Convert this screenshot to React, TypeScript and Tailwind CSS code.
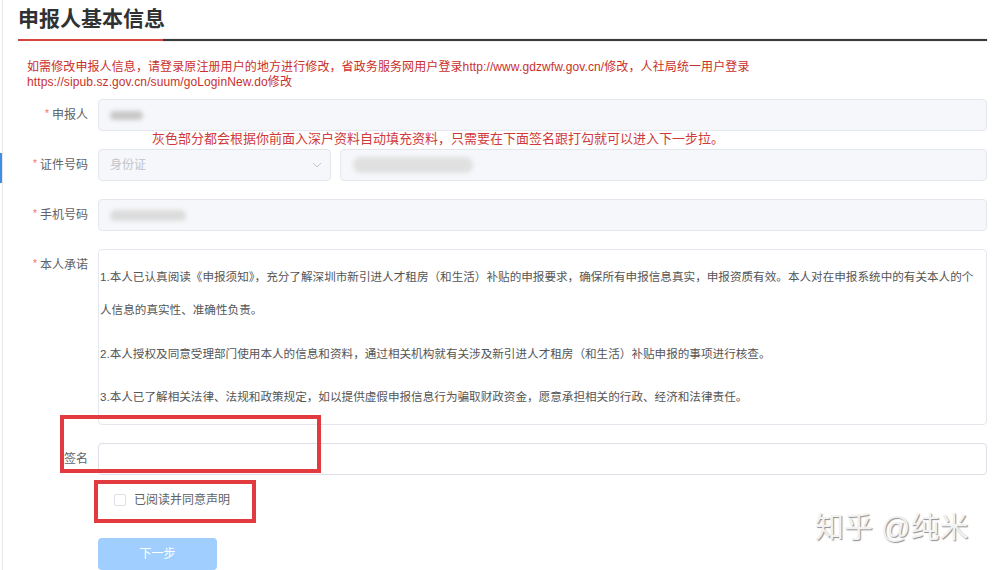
import React from "react";

const FONT = { fontFamily: '"Liberation Sans", "Noto Sans CJK SC", sans-serif' };

function Label({ text, star = true }: { text: string; star?: boolean }) {
  return (
    <div className="w-[80px] shrink-0 h-[32px] flex items-center justify-end pr-[10px] text-[12px] text-[#606266]">
      {star && <span className="text-[#f56c6c] text-[10px] mr-[3px] -mt-[4px]">*</span>}
      <span>{text}</span>
    </div>
  );
}

function Blob({ className }: { className: string }) {
  return <div className={"rounded-full blur-[2px] " + className} />;
}

export default function App() {
  return (
    <div className="relative w-[999px] h-[570px] overflow-hidden bg-white flex" style={FONT}>
      {/* sidebar edge */}
      <div className="w-[2px] shrink-0">
        <div className="mt-[153px] h-[30px] w-[2px] bg-[#3d8fe6]" />
      </div>

      <div className="flex-1 border-l border-[#e6e6e6] pl-[15px] pr-[12px]">
        {/* title */}
        <div className="pt-[5px] h-[33px] leading-[28px] text-[21px] font-bold text-[#303133]">
          申报人基本信息
        </div>
        <div className="mt-[6px] flex items-center">
          <div className="w-[145px] h-[2px] bg-[#d8433f]" />
          <div className="flex-1 h-[2px] bg-[#3a3a3a] shadow-[0_0_1px_#666]" />
        </div>

        {/* notice */}
        <div className="mt-[19px] pl-[9px] text-[12px] leading-[15px] tracking-[0.1px] text-[#c9302c]">
          如需修改申报人信息，请登录原注册用户的地方进行修改，省政务服务网用户登录http://www.gdzwfw.gov.cn/修改，人社局统一用户登录
          <br />
          https://sipub.sz.gov.cn/suum/goLoginNew.do修改
        </div>

        {/* form */}
        <div className="relative mt-[9px]">
          {/* row 1 */}
          <div className="flex items-center h-[32px]">
            <Label text="申报人" />
            <div className="flex-1 h-[32px] rounded-[4px] border border-[#e4e7ed] bg-[#f5f7fa] flex items-center pl-[11px]">
              <Blob className="w-[33px] h-[9px] bg-[#c8c8c8]" />
            </div>
          </div>

          <div className="absolute left-[134px] top-[32px] text-[13px] leading-[16px] text-[#d0393a] whitespace-nowrap">
            灰色部分都会根据你前面入深户资料自动填充资料，只需要在下面签名跟打勾就可以进入下一步拉。
          </div>

          {/* row 2 */}
          <div className="flex items-center h-[32px] mt-[18px]">
            <Label text="证件号码" />
            <div className="w-[233px] h-[32px] rounded-[4px] border border-[#e4e7ed] bg-[#f5f7fa] flex items-center justify-between pl-[11px] pr-[8px]">
              <span className="text-[12px] text-[#c0c4cc]">身份证</span>
              <svg width="10" height="6" viewBox="0 0 10 6" fill="none">
                <polyline points="1,1 5,5 9,1" stroke="#c0c4cc" strokeWidth="1" />
              </svg>
            </div>
            <div className="flex-1 ml-[9px] h-[32px] rounded-[4px] border border-[#e4e7ed] bg-[#f5f7fa] flex items-center pl-[12px]">
              <Blob className="w-[120px] h-[16px] bg-[#e0e0e0]" />
            </div>
          </div>

          {/* row 3 */}
          <div className="flex items-center h-[32px] mt-[18px]">
            <Label text="手机号码" />
            <div className="flex-1 h-[32px] rounded-[4px] border border-[#e4e7ed] bg-[#f5f7fa] flex items-center pl-[11px]">
              <Blob className="w-[76px] h-[11px] bg-[#dcdcdc]" />
            </div>
          </div>

          {/* row 4 */}
          <div className="flex items-start mt-[18px]">
            <Label text="本人承诺" />
            <div className="flex-1 h-[176px] rounded-[4px] border border-[#e4e7ed] bg-white pl-[1px] pt-[10px] text-[11.6px] leading-[33px] text-[#555555] whitespace-nowrap">
              <div>1.本人已认真阅读《申报须知》，充分了解深圳市新引进人才租房（和生活）补贴的申报要求，确保所有申报信息真实，申报资质有效。本人对在申报系统中的有关本人的个</div>
              <div>人信息的真实性、准确性负责。</div>
              <div className="mt-[11px]">2.本人授权及同意受理部门使用本人的信息和资料，通过相关机构就有关涉及新引进人才租房（和生活）补贴申报的事项进行核查。</div>
              <div className="mt-[10px]">3.本人已了解相关法律、法规和政策规定，如以提供虚假申报信息行为骗取财政资金，愿意承担相关的行政、经济和法律责任。</div>
            </div>
          </div>

          {/* row 5 */}
          <div className="flex items-center h-[32px] mt-[18px]">
            <Label text="签名" star={false} />
            <div className="flex-1 h-[32px] rounded-[4px] border border-[#dcdfe6] bg-white" />
          </div>

          {/* checkbox */}
          <div className="mt-[18px] h-[14px] pl-[96px] flex items-center">
            <div className="w-[12px] h-[12px] rounded-[2px] border border-[#dcdfe6] bg-white" />
            <span className="ml-[8px] text-[12px] text-[#606266]">已阅读并同意声明</span>
          </div>

          {/* button */}
          <div className="mt-[31px] ml-[80px] w-[119px] h-[32px] rounded-[4px] bg-[#a0cfff] flex items-center justify-center text-[12px] text-white">
            下一步
          </div>
        </div>
      </div>

      {/* annotation boxes */}
      <div className="absolute left-[60px] top-[415px] w-[261px] h-[58px] border-[4px] border-[#e23b3f]" />
      <div className="absolute left-[94px] top-[480px] w-[162px] h-[43px] border-[4px] border-[#e23b3f]" />

      {/* watermark */}
      <div className="absolute left-[815px] top-[510px] text-[29px] leading-[36px] text-[#f2f2f2] [text-shadow:1px_1px_1px_#8f8f8f] whitespace-nowrap">
        知乎 @纯米
      </div>
    </div>
  );
}
